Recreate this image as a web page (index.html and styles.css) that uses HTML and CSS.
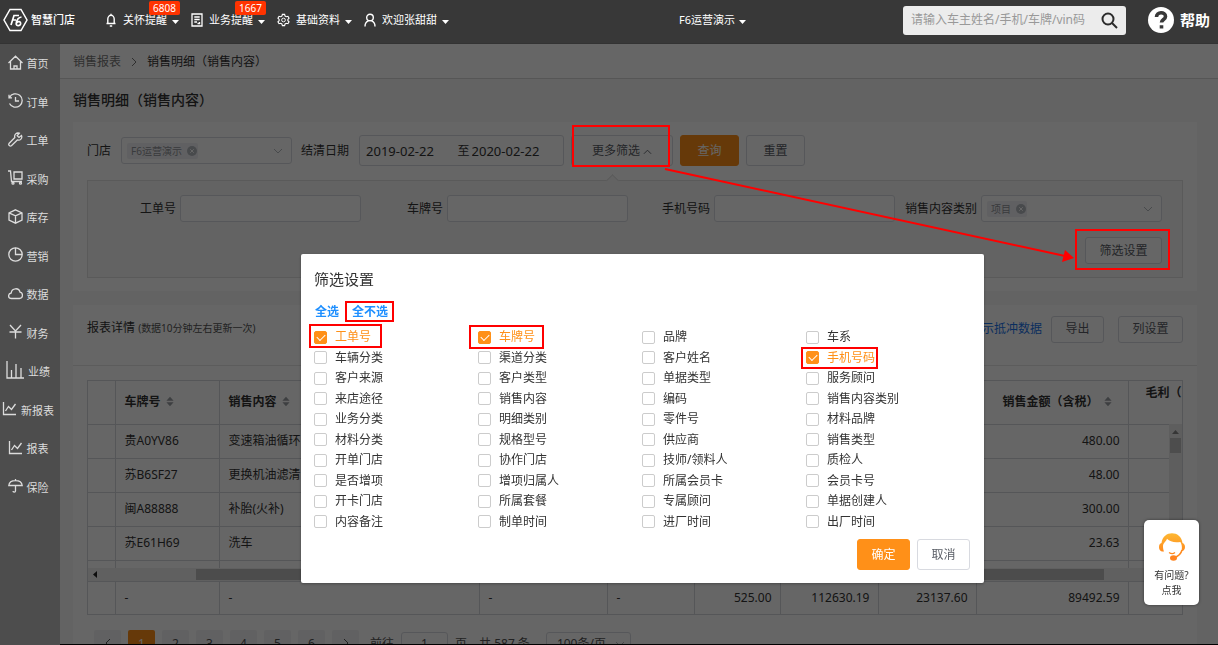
FILE: index.html
```html
<!DOCTYPE html>
<html lang="zh-CN">
<head>
<meta charset="utf-8">
<title>销售明细（销售内容）</title>
<link rel="stylesheet" href="styles.css">
</head>
<body>
<svg class="defs" width="0" height="0" aria-hidden="true">
  <symbol id="down" viewBox="0 0 10 6"><path d="M1 1l4 4 4-4"/></symbol>
  <symbol id="close" viewBox="0 0 10 10"><circle cx="5" cy="5" r="5" fill="#b4b8bf" stroke="none"/><path d="M3.2 3.2l3.6 3.6M6.8 3.2L3.2 6.8" stroke="#fff"/></symbol>
  <symbol id="sort" viewBox="0 0 10 12"><path d="M5 0l4.500 5h-9zM5 12L.5 7h9z" fill="#9a9da3" stroke="none"/></symbol>
  <symbol id="caret" viewBox="0 0 7 4"><path d="M0 0h7L3.500 4z" fill="#fff" stroke="none"/></symbol>
</svg>

<header class="topbar">
  <a class="logo" href="#">
    <svg width="25" height="24" viewBox="0 0 25 24" stroke-width="1.500"><path d="M7 1.500h11L24 12l-6 10.500H7L1 12z"/><path d="M8 17l3-9.500h5M9.300 12H13M18.500 9c-3 .3-4.800 3-5.300 6.500-.2 3 4 2.800 4.400.2.300-2.500-3-2.700-4-.6" stroke-width="1.700"/></svg>
    <span>智慧门店</span>
  </a>
  <nav class="topnav">
    <button class="navitem"><svg width="12" height="14" viewBox="0 0 12 14"><path d="M1.500 10.500h9M2.800 10.500V6a3.200 3.700 0 0 1 6.400 0v4.500M6 2V.8M4.800 13h2.400" stroke-width="1.400"/></svg><span>关怀提醒</span><svg class="caret"><use href="#caret"/></svg><b class="badge">6808</b></button>
    <button class="navitem"><svg width="12" height="14" viewBox="0 0 12 14"><path d="M1 1h10v12H1zM3.300 4h5.400M3.300 6.500h5.400M3.300 9H6M8.500 9v1.500H6.500" stroke-width="1.300"/></svg><span>业务提醒</span><svg class="caret"><use href="#caret"/></svg><b class="badge">1667</b></button>
    <button class="navitem"><svg width="13" height="14" viewBox="0 0 14 14"><path d="M5.800 1h2.400l.5 1.800 1.300.7 1.800-.5L13 5l-1.300 1.400v1.300L13 9l-1.200 2-1.800-.5-1.300.7L8.200 13H5.800l-.5-1.800-1.300-.7-1.800.5L1 9l1.300-1.300V6.400L1 5l1.200-2 1.800.5 1.300-.7z" stroke-width="1.200"/><circle cx="7" cy="7" r="2"/></svg><span>基础资料</span><svg class="caret"><use href="#caret"/></svg></button>
    <button class="navitem"><svg width="12" height="14" viewBox="0 0 12 14"><circle cx="6" cy="4.500" r="3.300" stroke-width="1.400"/><path d="M1 13.500c0-3 1.500-5 3.500-5.600M11 13.500c0-3-1.500-5-3.500-5.600" stroke-width="1.400"/></svg><span>欢迎张甜甜</span><svg class="caret"><use href="#caret"/></svg></button>
  </nav>
  <button class="navitem org"><span>F6运营演示</span><svg class="caret"><use href="#caret"/></svg></button>
  <form class="search">
    <input type="text" aria-label="搜索" placeholder="请输入车主姓名/手机/车牌/vin码">
    <button type="button" aria-label="搜索"><svg width="17" height="17" viewBox="0 0 17 17"><circle cx="7" cy="7" r="5.500"/><path d="M11 11l5 5"/></svg></button>
  </form>
  <a class="help" href="#"><svg width="26" height="26" viewBox="0 0 26 26"><circle cx="13" cy="13" r="13" fill="#fff" stroke="none"/><path d="M8.500 10c0-5.500 9-5.500 9-.6 0 3.200-4 3-4 6.200M13.500 18.200v3.200" stroke="#383838" stroke-width="3.600"/></svg><span>帮助</span></a>
</header>

<div class="shell">
  <nav class="sidebar">
    <div class="menu">
    <a href="#"><svg viewBox="0 0 15 15"><path d="M.5 8L7.500 1.200 14.500 8M2.500 6.500V14h10V6.500M6 14v-3h3v3"/></svg><span>首页</span></a>
    <a href="#"><svg viewBox="0 0 15 15"><path d="M1.500 4.500A6.700 6.700 0 1 1 1.500 10.500M1 1.800v3h3M7.500 4v4H11"/></svg><span>订单</span></a>
    <a href="#"><svg viewBox="0 0 15 15"><path d="M13.500 3.500l-2.500 2-1.800-1.800L11.300 1.200C8.500.3 6 2.500 6.800 5.500L1 11.500c-1 1.500 1 3.300 2.400 2.300L9.300 8c3 .8 5.300-1.700 4.200-4.500z"/></svg><span>工单</span></a>
    <a href="#"><svg viewBox="0 0 15 15"><path d="M0 1h2.500l1 10.500H14M6 2h8v7H6z"/><circle cx="5" cy="13.200" r="1"/><circle cx="12.500" cy="13.200" r="1"/></svg><span>采购</span></a>
    <a href="#"><svg viewBox="0 0 15 15"><path d="M7.500.8l6.500 3v7.400l-6.500 3-6.500-3V3.800zM1 3.800l6.500 3 6.500-3M7.500 6.800v7.400"/></svg><span>库存</span></a>
    <a href="#"><svg viewBox="0 0 15 15"><circle cx="7.500" cy="7.500" r="6.700"/><path d="M7.500.8v6.700h6.700"/></svg><span>营销</span></a>
    <a href="#"><svg viewBox="0 0 15 15"><path d="M3.500 12.500c-3.800 0-3.800-5-.3-5.500.6-5.500 8-5.500 8.800-.8 3.500.5 3.200 6.300-.5 6.300z"/></svg><span>数据</span></a>
    <a href="#"><svg viewBox="0 0 15 15"><path d="M2 1l5.500 6L13 1M1.500 8h12M7.500 7v7.500"/></svg><span>财务</span></a>
    <a href="#"><svg class="wide" viewBox="0 0 18 18"><path d="M1 0v17h17M5.500 17V9M10 17V3M15 17V7"/></svg><span>业绩</span></a>
    <a href="#"><svg viewBox="0 0 15 15"><path d="M1.500 1v12.500H14M3.500 10L6.500 5.500l3 3L13.500 3"/></svg><span>新报表</span></a>
    <a href="#"><svg viewBox="0 0 15 15"><path d="M1.500 1v12.500H14M3.500 10L6.500 5.500l3 3L13.500 3"/></svg><span>报表</span></a>
    <a href="#"><svg viewBox="0 0 15 15"><path d="M.8 7.500C1.500 1 13.500 1 14.200 7.500zM7.500 7.500v5.500c0 1.500-2.500 1.500-2.500 0M7.500 2.500V1"/></svg><span>保险</span></a>
    </div>
  </nav>

  <main class="main">
    <nav class="crumbs"><a href="#">销售报表</a><svg width="6" height="10" viewBox="0 0 6 10"><path d="M1 1l4 4-4 4"/></svg><span>销售明细（销售内容）</span></nav>
    <h1>销售明细（销售内容）</h1>

    <section class="card filters">
      <div class="filter-row">
        <label for="store">门店</label>
        <div class="tagbox store"><span class="tag"><select id="store"><option>F6运营演示</option></select><button aria-label="移除"><svg width="10" height="10"><use href="#close"/></svg></button></span><svg class="chev"><use href="#down"/></svg></div>
        <label class="datelabel" for="from">结清日期</label>
        <div class="dates"><input id="from" type="text" value="2019-02-22"><label for="to">至</label><input id="to" type="text" value="2020-02-22"></div>
        <button class="btn more">更多筛选 <svg width="9" height="6" viewBox="0 0 10 6"><path d="M1 5l4-4 4 4"/></svg></button>
        <button class="btn primary">查询</button>
        <button class="btn">重置</button>
      </div>
      <div class="panel">
        <div class="fields">
          <div class="field"><label for="f1">工单号</label><input id="f1" type="text"></div>
          <div class="field"><label for="f2">车牌号</label><input id="f2" type="text"></div>
          <div class="field"><label for="f3">手机号码</label><input id="f3" type="text"></div>
          <div class="field"><label for="f4">销售内容类别</label><div class="tagbox"><span class="tag"><select id="f4"><option>项目</option></select><button aria-label="移除"><svg width="10" height="10"><use href="#close"/></svg></button></span><svg class="chev"><use href="#down"/></svg></div></div>
        </div>
        <button class="btn small setting">筛选设置</button>
      </div>
    </section>

    <section class="card report">
      <div class="report-head">
        <h2>报表详情 <small>(数据10分钟左右更新一次)</small></h2>
        <a href="#">显示抵冲数据</a>
        <button class="btn small">导出</button>
        <button class="btn small cols">列设置</button>
      </div>
      <div class="grid">
        <div class="rows">
          <table>
            <colgroup><col class="c0"><col class="c1"><col class="c2"><col class="c3"><col class="c4"><col class="c5"><col class="c6"><col class="c6"><col class="c7"><col></colgroup>
            <thead><tr><th></th><th>车牌号 <svg class="sort"><use href="#sort"/></svg></th><th>销售内容 <svg class="sort"><use href="#sort"/></svg></th><th></th><th></th><th></th><th></th><th></th><th class="amount">销售金额（含税） <svg class="sort"><use href="#sort"/></svg></th><th class="profit">毛利（</th></tr></thead>
            <tbody>
              <tr><td></td><td>贵A0YV86</td><td>变速箱油循环</td><td></td><td></td><td></td><td></td><td></td><td class="num">480.00</td><td></td></tr>
              <tr><td></td><td>苏B6SF27</td><td>更换机油滤清</td><td></td><td></td><td></td><td></td><td></td><td class="num">48.00</td><td></td></tr>
              <tr><td></td><td>闽A88888</td><td>补胎(火补)</td><td></td><td></td><td></td><td></td><td></td><td class="num">300.00</td><td></td></tr>
              <tr><td></td><td>苏E61H69</td><td>洗车</td><td></td><td></td><td></td><td></td><td></td><td class="num">23.63</td><td></td></tr>
              <tr><td></td><td></td><td></td><td></td><td></td><td></td><td></td><td></td><td></td><td></td></tr>
            </tbody>
          </table>
          <div class="vscroll"><svg width="7" height="4" viewBox="0 0 7 4"><path d="M0 4h7L3.500 0z" fill="#888" stroke="none"/></svg><i></i></div>
        </div>
        <div class="hscroll"><svg width="4" height="7" viewBox="0 0 4 7"><path d="M4 0v7L0 3.500z" fill="#222" stroke="none"/></svg><i></i></div>
        <table class="total">
          <colgroup><col class="c0"><col class="c1"><col class="c2"><col class="c3"><col class="c4"><col class="c5"><col class="c6"><col class="c6"><col class="c7"><col></colgroup>
          <tbody><tr><td></td><td>-</td><td>-</td><td>-</td><td>-</td><td class="num">525.00</td><td class="num">112630.19</td><td class="num">23137.60</td><td class="num">89492.59</td><td></td></tr></tbody>
        </table>
      </div>
      <div class="pager">
        <button aria-label="上一页"><svg width="6" height="10" viewBox="0 0 6 10"><path d="M5 1L1 5l4 4"/></svg></button>
        <button class="on">1</button><button>2</button><button>3</button><button>4</button><button>5</button><button>6</button>
        <button aria-label="下一页"><svg width="6" height="10" viewBox="0 0 6 10"><path d="M1 1l4 4-4 4"/></svg></button>
        <label for="page">前往</label><input id="page" type="text" value="1"><span>页</span><span class="count">共 587 条</span>
        <span class="size"><select aria-label="每页条数"><option>100条/页</option></select><svg class="chev"><use href="#down"/></svg></span>
      </div>
    </section>
  </main>
</div>

<div class="mask"></div>

<div class="dialog" role="dialog" aria-labelledby="dlg">
  <h2 id="dlg">筛选设置</h2>
  <div class="picks"><a href="#">全选</a><a href="#">全不选</a></div>
  <div class="checks">
    <label><input type="checkbox" checked><span>工单号</span></label>
    <label><input type="checkbox" checked><span>车牌号</span></label>
    <label><input type="checkbox"><span>品牌</span></label>
    <label><input type="checkbox"><span>车系</span></label>
    <label><input type="checkbox"><span>车辆分类</span></label>
    <label><input type="checkbox"><span>渠道分类</span></label>
    <label><input type="checkbox"><span>客户姓名</span></label>
    <label><input type="checkbox" checked><span>手机号码</span></label>
    <label><input type="checkbox"><span>客户来源</span></label>
    <label><input type="checkbox"><span>客户类型</span></label>
    <label><input type="checkbox"><span>单据类型</span></label>
    <label><input type="checkbox"><span>服务顾问</span></label>
    <label><input type="checkbox"><span>来店途径</span></label>
    <label><input type="checkbox"><span>销售内容</span></label>
    <label><input type="checkbox"><span>编码</span></label>
    <label><input type="checkbox"><span>销售内容类别</span></label>
    <label><input type="checkbox"><span>业务分类</span></label>
    <label><input type="checkbox"><span>明细类别</span></label>
    <label><input type="checkbox"><span>零件号</span></label>
    <label><input type="checkbox"><span>材料品牌</span></label>
    <label><input type="checkbox"><span>材料分类</span></label>
    <label><input type="checkbox"><span>规格型号</span></label>
    <label><input type="checkbox"><span>供应商</span></label>
    <label><input type="checkbox"><span>销售类型</span></label>
    <label><input type="checkbox"><span>开单门店</span></label>
    <label><input type="checkbox"><span>协作门店</span></label>
    <label><input type="checkbox"><span>技师/领料人</span></label>
    <label><input type="checkbox"><span>质检人</span></label>
    <label><input type="checkbox"><span>是否增项</span></label>
    <label><input type="checkbox"><span>增项归属人</span></label>
    <label><input type="checkbox"><span>所属会员卡</span></label>
    <label><input type="checkbox"><span>会员卡号</span></label>
    <label><input type="checkbox"><span>开卡门店</span></label>
    <label><input type="checkbox"><span>所属套餐</span></label>
    <label><input type="checkbox"><span>专属顾问</span></label>
    <label><input type="checkbox"><span>单据创建人</span></label>
    <label><input type="checkbox"><span>内容备注</span></label>
    <label><input type="checkbox"><span>制单时间</span></label>
    <label><input type="checkbox"><span>进厂时间</span></label>
    <label><input type="checkbox"><span>出厂时间</span></label>
  </div>
  <div class="actions"><button class="btn primary">确定</button><button class="btn">取消</button></div>
</div>

<svg class="marks" aria-hidden="true">
  <rect x="573" y="126" width="96" height="40"/>
  <rect x="1076" y="230" width="93" height="39"/>
  <rect x="346" y="302" width="47" height="19"/>
  <rect x="310" y="325" width="71" height="22"/>
  <rect x="470" y="326" width="73" height="22"/>
  <rect x="802" y="348" width="75" height="20"/>
  <path d="M665 169L1065 256"/>
  <path class="head" d="M1074 258L1062 262L1065 250Z"/>
</svg>

<button class="service">
  <svg width="28" height="28" viewBox="0 0 28 28"><defs><linearGradient id="hair" x1="0" y1="0" x2="0" y2="1"><stop offset="0" stop-color="#fdb833"/><stop offset="1" stop-color="#ff8a1e"/></linearGradient></defs><path d="M3.500 10C5-3 23-3 24.500 10c1.500.6 2.500 2 2.500 4s-1 3.500-2.500 4h-1c.8-4 .3-7-1.200-9C16 10 12 8.500 9 5.800c-.5 2.200-3.800 4.200-4 7.200 0 2 .3 4 1 5.500C2.500 19 1 16.500 1 14s1-3.500 2.500-4z" fill="url(#hair)" stroke="none"/><path d="M24 17c-1 4-4 6.500-8 7.500" stroke="#ff8a1e" stroke-width="1.500"/><ellipse cx="15.500" cy="25" rx="3.500" ry="2.700" fill="#ff8420" stroke="none"/><path d="M11 19.500c1.800 1.300 4.500 1.300 6 0" stroke="#ff8a1e" stroke-width="1.300"/></svg>
  <span>有问题?</span><span>点我</span>
</button>
</body>
</html>
```
FILE: styles.css
```css
* { box-sizing: border-box; }
html, body { height: 100%; }
body {
  margin: 0;
  display: flex;
  flex-direction: column;
  overflow: hidden;
  background: #f7f7f7;
  color: #333;
  font: 12px/16px "Noto Sans", "Noto Sans CJK SC", sans-serif;
}
a { color: inherit; text-decoration: none; }
button, input, select { font: inherit; color: inherit; margin: 0; }
button { border: 0; padding: 0; background: none; cursor: pointer; }
input, select { outline: 0; min-width: 0; }
select { appearance: none; border: 0; background: none; padding: 0; }
svg { flex: none; fill: none; stroke: currentColor; }
h1, h2 { margin: 0; font-weight: 500; }
.defs { position: absolute; }

/* top bar */
.topbar {
  position: relative;
  z-index: 20;
  flex: none;
  height: 44px;
  padding: 0 8px 3px 3px;
  display: flex;
  align-items: center;
  background: #383838;
  border-bottom: 1px solid #333;
  color: #fff;
}
.logo { display: flex; align-items: center; gap: 3px; font-size: 11px; font-weight: 500; }
.topnav { display: flex; gap: 12px; margin-left: 30px; flex: 1; }
.navitem { position: relative; display: flex; align-items: center; gap: 6px; font-size: 11px; white-space: nowrap; }
.navitem svg { margin-top: -1px; }
.navitem .caret { width: 7px; height: 4px; margin: 3px 0 0 -1px; }
.badge {
  position: absolute;
  top: -11px;
  right: -1px;
  padding: 0 4px;
  border-radius: 2px;
  background: #ff3300;
  font-size: 10px;
  font-weight: 400;
  line-height: 14px;
}
.org { margin-right: 157px; gap: 5px; }
.search {
  display: flex;
  align-items: center;
  width: 223px;
  height: 29px;
  padding: 0 8px;
  border-radius: 3px;
  background: #ececec;
}
.search input { flex: 1; border: 0; padding: 0; background: none; }
.search input::placeholder { color: #999; }
.search button { display: flex; color: #2b2b2b; }
.search svg { stroke-width: 2; }
.help { display: flex; align-items: center; gap: 6px; margin-left: 22px; font-size: 15px; font-weight: 700; }

/* side bar */
.shell { flex: 1; min-height: 0; display: flex; }
.sidebar {
  position: relative;
  z-index: 20;
  flex: none;
  width: 60px;
  padding: 1px 4px 0 0;
  background: #4d4d4d;
  color: #dcdcdc;
  font-size: 11px;
}
.menu { display: grid; grid-template-rows: repeat(12, 1fr); height: 462px; }
.menu a { display: flex; align-items: center; justify-content: center; gap: 4px; white-space: nowrap; }
.menu svg { width: 15px; height: 15px; margin-bottom: 4px; stroke-width: 1.300; }
.menu .wide { width: 18px; height: 18px; }

/* page */
.main { flex: 1; min-width: 0; overflow: hidden; border-bottom: 1px solid #000; }
.crumbs {
  display: flex;
  align-items: center;
  gap: 10px;
  height: 35px;
  padding: 1px 13px 0;
  background: #fff;
  border-bottom: 1px solid #d6d6d6;
}
.crumbs a, .crumbs svg { color: #777; }
h1 { padding: 11px 13px 12px; font-size: 14px; line-height: 20px; }
.card { margin: 0 21px 14px 13px; padding: 13px 14px; background: #fff; }
.btn {
  height: 31px;
  min-width: 59px;
  padding: 0 15px;
  border: 1px solid #d8dae0;
  border-radius: 3px;
  background: #fff;
  color: #5a5e66;
  white-space: nowrap;
}
.btn.small { height: 27px; min-width: 53px; padding: 0 13px; }
.btn.primary { background: #ff9018; border-color: #ff9018; color: #fff; }

.filter-row { display: flex; align-items: center; gap: 7px; }
.tagbox {
  display: flex;
  align-items: center;
  width: 181px;
  height: 27px;
  padding: 0 8px 0 5px;
  border: 1px solid #d8dae0;
  border-radius: 3px;
  background: #fff;
}
.store { width: 171px; margin: 0 2px 0 3px; }
.tag {
  display: flex;
  align-items: center;
  gap: 5px;
  padding: 0 1px 0 4px;
  border-radius: 2px;
  background: #f0f1f4;
  color: #909399;
  font-size: 10px;
  line-height: 16px;
}
.tag button { display: flex; }
.chev { width: 10px; height: 6px; margin-left: auto; color: #b4b8bf; }
.dates {
  display: flex;
  align-items: center;
  width: 205px;
  height: 31px;
  margin-left: 3px;
  padding-left: 6px;
  border: 1px solid #d8dae0;
  border-radius: 3px;
}
.dates input { flex: 1; padding: 0; border: 0; background: none; font-size: 13px; }
.dates label { padding-right: 2px; }
.more { width: 102px; }

.panel {
  position: relative;
  margin-top: 14px;
  padding: 14px 20px 13px 6px;
  border: 1px solid #e2e2e2;
  background: #f7f7f7;
  display: flex;
  flex-direction: column;
}
.panel::before {
  content: "";
  position: absolute;
  left: 520px;
  top: -5px;
  width: 8px;
  height: 8px;
  border: solid #e2e2e2;
  border-width: 1px 0 0 1px;
  background: #f7f7f7;
  transform: rotate(45deg);
}
.fields { display: grid; grid-template-columns: repeat(4, 1fr); }
.field { display: flex; align-items: center; justify-content: flex-end; gap: 4px; white-space: nowrap; }
.field > input { width: 181px; height: 27px; border: 1px solid #d8dae0; border-radius: 3px; background: #fff; }
.setting { align-self: flex-end; margin-top: 15px; width: 77px; }

.report { padding: 0 14px; }
.report-head {
  display: flex;
  align-items: center;
  height: 61px;
  margin: 0 -14px 14px;
  padding: 0 14px 12px;
  border-bottom: 1px solid #e6e6e6;
}
.report-head h2 { flex: 1; padding-bottom: 3px; font-size: 12px; font-weight: 400; }
.report-head small { font-size: 10px; color: #555; }
.report-head a { margin-right: 9px; color: #1b74ea; }
.report-head .cols { width: 65px; margin-left: 14px; }

.grid { border: 1px solid #d4d6dc; }
table { width: 100%; border-collapse: collapse; table-layout: fixed; }
.c0 { width: 27px; } .c1 { width: 104px; } .c2 { width: 260px; } .c3 { width: 128px; }
.c4 { width: 87px; } .c5 { width: 86px; } .c6 { width: 98px; } .c7 { width: 152px; }
th, td {
  height: 34px;
  padding: 0 8px 0 9px;
  border: 1px solid #d4d6dc;
  text-align: left;
  white-space: nowrap;
  overflow: hidden;
}
th { height: 43px; font-weight: 700; }
.rows table, .total { border-style: hidden; }
.num { text-align: right; }
.total td { height: 32px; }
th.amount { padding-left: 26px; }
th.profit { padding: 4px 0 0 17px; vertical-align: top; }
.sort { width: 8px; height: 11px; margin-left: 2px; vertical-align: -1px; }
.rows { position: relative; height: 187px; overflow: hidden; }
.vscroll {
  position: absolute;
  top: 43px;
  right: 0;
  bottom: 0;
  width: 13px;
  padding-top: 6px;
  display: flex;
  flex-direction: column;
  align-items: center;
  gap: 4px;
  background: #ececec;
}
.vscroll i { width: 11px; height: 15px; background: #c1c1c1; }
.hscroll { display: flex; align-items: center; height: 14px; padding: 0 78px 0 5px; background: #f0f0f0; border-bottom: 1px solid #d4d6dc; }
.hscroll i { flex: 1; height: 11px; margin-left: 99px; background: #bdbdbd; }

.pager { display: flex; align-items: center; gap: 7px; padding: 15px 7px; color: #555; }
.pager > button { width: 27px; height: 27px; border-radius: 2px; background: #f2f3f5; }
.pager .on { background: #ff9018; color: #fff; }
.pager label { margin-left: 4px; }
.pager input { width: 47px; height: 24px; border: 1px solid #d8dae0; border-radius: 3px; text-align: center; }
.count { margin-left: 5px; }
.size { display: flex; align-items: center; width: 85px; height: 24px; margin-left: 9px; padding: 0 5px 0 10px; border: 1px solid #d8dae0; border-radius: 3px; }

.mask { position: fixed; inset: 44px 0 0; z-index: 10; background: rgba(0, 0, 0, .6); }

/* dialog */
.dialog {
  position: fixed;
  z-index: 30;
  left: 301px;
  top: 254px;
  width: 683px;
  padding: 15px 14px 13px 13px;
  display: flex;
  flex-direction: column;
  border-radius: 2px;
  background: #fff;
  box-shadow: 0 1px 3px rgba(0, 0, 0, .3);
}
.dialog h2 { font-size: 15px; font-weight: 400; line-height: 20px; }
.picks { display: flex; gap: 13px; margin: 15px 0 7px 1px; color: #1e8fff; font-weight: 700; }
.checks { height: 205px; display: grid; grid-template-columns: repeat(4, 1fr); grid-auto-rows: 1fr; margin-bottom: 7px; }
.checks label { display: flex; align-items: center; gap: 8px; }
.checks input {
  appearance: none;
  width: 13px;
  height: 13px;
  border: 1px solid #ccc;
  border-radius: 2px;
  background: #fff;
  display: grid;
  place-items: center;
}
.checks input:checked { background: #ff9018; border-color: #ff9018; }
.checks input:checked::after {
  content: "";
  width: 7px;
  height: 4px;
  margin-bottom: 2px;
  border: solid #fff;
  border-width: 0 0 1px 1px;
  transform: rotate(-45deg);
}
.checks input:checked + span { color: #ff9018; }
.actions { display: flex; justify-content: flex-end; gap: 7px; }
.actions .btn { min-width: 53px; padding: 0 13px; }

.marks { position: fixed; inset: 0; z-index: 40; width: 100%; height: 100%; pointer-events: none; stroke: #f00; stroke-width: 2; }
.marks .head { fill: #f00; stroke: none; }

.service {
  position: fixed;
  z-index: 30;
  right: 19px;
  bottom: 40px;
  width: 55px;
  padding: 13px 0 7px;
  display: flex;
  flex-direction: column;
  align-items: center;
  border-radius: 5px;
  background: #fff;
  box-shadow: 0 0 3px rgba(0, 0, 0, .5);
  font-size: 10px;
  line-height: 15px;
}
.service svg { margin-bottom: 7px; }
```
